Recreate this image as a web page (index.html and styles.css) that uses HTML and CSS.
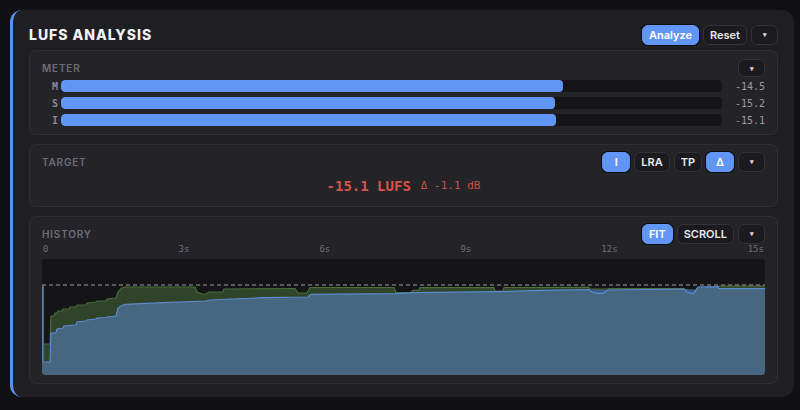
FILE: index.html
```html
<!DOCTYPE html>
<html lang="en">
<head>
  <meta charset="UTF-8">
  <meta name="viewport" content="width=device-width, initial-scale=1.0">
  <title>LUFS Analysis</title>
  <link rel="stylesheet" href="styles.css">
</head>
<body>
  <div class="panel">
    <div class="panel-head">
      <h1>LUFS ANALYSIS</h1>
      <div class="btns">
        <button class="btn on">Analyze</button>
        <button class="btn">Reset</button>
        <button class="btn dd">▾</button>
      </div>
    </div>

    <section class="box meter">
      <div class="box-head">
        <span class="label">METER</span>
        <div class="btns"><button class="btn dd small">▾</button></div>
      </div>
      <div class="rows">
        <div class="row"><span class="ch">M</span><div class="track"><div class="fill" style="width:76%"></div></div><span class="val">-14.5</span></div>
        <div class="row"><span class="ch">S</span><div class="track"><div class="fill" style="width:74.8%"></div></div><span class="val">-15.2</span></div>
        <div class="row"><span class="ch">I</span><div class="track"><div class="fill" style="width:74.9%"></div></div><span class="val">-15.1</span></div>
      </div>
    </section>

    <section class="box target">
      <div class="box-head">
        <span class="label">TARGET</span>
        <div class="btns">
          <button class="btn on">I</button>
          <button class="btn">LRA</button>
          <button class="btn">TP</button>
          <button class="btn on">Δ</button>
          <button class="btn dd">▾</button>
        </div>
      </div>
      <div class="target-value">
        <span class="big">-15.1 LUFS</span>
        <span class="delta">Δ -1.1 dB</span>
      </div>
    </section>

    <section class="box history">
      <div class="box-head">
        <span class="label">HISTORY</span>
        <div class="btns">
          <button class="btn on">FIT</button>
          <button class="btn">SCROLL</button>
          <button class="btn dd">▾</button>
        </div>
      </div>
      <div class="axis">
        <span>0</span><span>3s</span><span>6s</span><span>9s</span><span>12s</span><span>15s</span>
      </div>
      <div class="chart">
        <svg id="hist" width="724" height="116" viewBox="0 0 724 116"></svg>
      </div>
    </section>
  </div>

  <script>
    const W = 724, H = 116, TARGET_Y = 26;

    // short-term loudness (green) and integrated (blue), in chart px
    const shortTerm = [
      [0,26],[1,26],[1,85],[8,85],[9,57],[12,57],[13,54],[15,54],[16,52],[20,52],[21,50],[27,50],[28,48],
      [34,48],[35,46],[44,46],[45,44],[54,43],[55,42],[64,42],[65,40],[74,39],[76,33],[80,29],[83,28],
      [153,28],[155,33],[160,35],[164,35],[167,33],[181,33],[182,30],[253,29.5],[256,34],[265,34],[268,28.5],
      [352,28.5],[354,33.5],[369,33.5],[371,31.3],[377,31.3],[378,28.7],[452,28.7],[453,32],[461,32],
      [462,28.5],[547,28.3],[548,30],[566,30],[567,29.5],[642,29.5],[644,31],[654,31],[656,28.5],
      [676,28],[677,27.2],[724,27.2]
    ];
    const integrated = [
      [0,28],[1,28],[1,103],[8,103],[9,74],[14,74],[15,70],[21,69],[22,67],[34,66],[35,63],[44,62],
      [45,61],[54,60],[55,59],[64,58.5],[65,58],[74,57],[76,49],[79,47],[83,45.3],[121,43.7],[164,42],
      [168,41],[221,38.7],[266,38],[269,35.3],[354,34.7],[372,33.7],[456,32.7],[499,31.3],[547,30.5],
      [550,33],[556,34.3],[561,34.3],[566,31],[642,30],[645,33],[649,34.3],[652,34.3],[654,31],
      [656,28],[676,27.7],[677,29.7],[724,29.7]
    ];

    function line(p) {
      return 'M' + p.map(q => q.join(',')).join(' L');
    }
    function area(p) {
      return `M0,${H} L` + p.map(q => q.join(',')).join(' L') + ` L${W},${H} Z`;
    }

    document.getElementById('hist').innerHTML = `
      <path d="${area(shortTerm)}" fill="#2f4429"/>
      <path d="${line(shortTerm)}" fill="none" stroke="#4a6d3b" stroke-width="1.2"/>
      <path d="${area(integrated)}" fill="#47667f"/>
      <path d="M547,30.5 L550,33 L556,34.3 L561,34.3 L566,31 Z M642,30 L645,33 L649,34.3 L652,34.3 L654,31 Z" fill="#3b5a8e"/>
      <path d="${line(integrated)}" fill="none" stroke="#5a8ccf" stroke-width="1.2"/>
      <line x1="0" y1="${TARGET_Y}" x2="${W}" y2="${TARGET_Y}" stroke="#6f6f77" stroke-width="1.5" stroke-dasharray="4 3"/>
    `;
  </script>
</body>
</html>
```

FILE: styles.css
```css
body { margin: 0; background: #111113; font-family: Inter, "Liberation Sans", sans-serif; color: #e4e4e8; }
.panel { box-sizing: border-box; width: 784px; margin: 10px; padding: 14px 16px 13px 16px; background: #1f1f23; border-left: 3px solid #5b8ff5; border-radius: 12px; }
.panel-head { display: flex; align-items: center; justify-content: space-between; height: 21px; margin-bottom: 5px; }
h1 { margin: 0; font-size: 14px; font-weight: 800; letter-spacing: 1px; color: #f2f2f4; }

.btns { display: flex; gap: 4px; align-items: center; }
.btn { box-sizing: border-box; height: 20px; min-width: 28px; padding: 0 6px; border: 1px solid #323237; border-radius: 6px; background: #1b1b1f; color: #e8e8ec; font-family: Inter, "Liberation Sans", sans-serif; font-size: 11px; font-weight: 600; line-height: 18px; cursor: pointer; }
.btn.on { background: #6196f6; border-color: #6196f6; color: #fff; box-shadow: 0 0 0 1px #0d0d10; }
.btn.dd { width: 27px; min-width: 27px; padding: 0; font-size: 7px; color: #dcdce0; }
.btn.small { height: 18px; }

.box { box-sizing: border-box; background: #242428; border: 1px solid #2e2e33; border-radius: 7px; padding: 7px 12px 8px; margin-bottom: 9px; }
.box:last-child { margin-bottom: 0; }
.box-head { display: flex; align-items: center; justify-content: space-between; height: 20px; }
.label { font-size: 10px; font-weight: 600; letter-spacing: 0.8px; color: #6c6c78; }

.rows { display: flex; flex-direction: column; gap: 5px; margin-top: 2px; }
.row { display: grid; grid-template-columns: 16px 1fr 40px; column-gap: 3px; align-items: center; height: 12px; }
.ch { text-align: right; font-family: "DejaVu Sans Mono", monospace; font-size: 10px; font-weight: bold; color: #8a8a95; }
.track { height: 12px; background: #151518; border-radius: 4px; overflow: hidden; }
.fill { height: 100%; background: #6196f6; border-radius: 4px; box-shadow: 0 0 0 1px rgba(0,0,0,0.35); }
.val { text-align: right; font-family: "DejaVu Sans Mono", monospace; font-size: 10px; color: #9a9aa4; }

.target { padding-bottom: 9px; }
.target-value { margin-top: 2px; height: 23px; display: flex; align-items: center; justify-content: center; gap: 10px; font-family: "DejaVu Sans Mono", monospace; color: #d4534b; }
.big { font-size: 14px; font-weight: bold; }
.delta { font-size: 11px; color: #c9514a; }

.axis { display: flex; justify-content: space-between; height: 11px; line-height: 11px; font-family: "DejaVu Sans Mono", monospace; font-size: 9px; color: #6d6d77; padding: 0 1px; }
.chart { margin-top: 4px; height: 116px; background: #151518; border-radius: 4px; overflow: hidden; }
.chart svg { display: block; }
```
